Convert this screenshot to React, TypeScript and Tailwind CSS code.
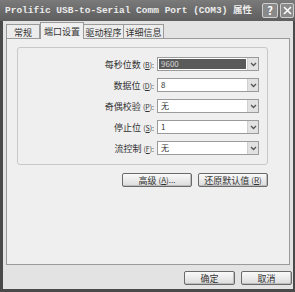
import React from 'react';

const cjk = '"Noto Sans CJK SC", "DejaVu Sans", sans-serif';

function Combo({ value, selected }: { value: string; selected?: boolean }) {
  return (
    <div className="flex h-[14px] w-[102px] border border-[#9a9a9a] bg-white">
      <div className="flex flex-1 items-center p-[1px]">
        <div
          className={
            'flex h-full flex-1 items-center pl-[2px] text-[8px] leading-none ' +
            (selected ? 'bg-[#5a5a5a] text-[#d8d8d8]' : 'text-[#333]')
          }
        >
          {value}
        </div>
      </div>
      <div className="flex w-[11px] items-center justify-center border-l border-[#d0d0d0] bg-[#e2e2e2]">
        <svg width="7" height="5" viewBox="0 0 7 5">
          <path d="M1 1 L3.5 3.5 L6 1" fill="none" stroke="#555" strokeWidth="1.3" />
        </svg>
      </div>
    </div>
  );
}

function Row({ label, value, selected }: { label: React.ReactNode; value: string; selected?: boolean }) {
  return (
    <div className="flex h-[14px] items-center">
      <div className="w-[139px] pr-[3px] text-right text-[9px] leading-none text-[#333]">{label}</div>
      <Combo value={value} selected={selected} />
    </div>
  );
}

function Key({ k }: { k: string }) {
  return (
    <span className="text-[7px]">
      (<span className="underline">{k}</span>):
    </span>
  );
}

function Btn({ children, w }: { children: React.ReactNode; w: string }) {
  return (
    <div
      className={
        w +
        ' flex h-[14px] items-center justify-center rounded-[2px] border border-[#6a6a6a] bg-gradient-to-b from-[#fafafa] to-[#dcdcdc] text-[9px] leading-none text-[#333] shadow-[inset_-1px_-1px_0_#bdbdbd]'
      }
    >
      {children}
    </div>
  );
}

export default function App() {
  return (
    <div
      className="flex h-[292px] w-[295px] flex-col overflow-hidden bg-[#4a4a4a]"
      style={{ fontFamily: cjk }}
    >
      {/* Title bar */}
      <div className="flex h-[21px] items-center bg-gradient-to-b from-[#7a7a7a] to-[#5e5e5e] pl-[5px] pr-[1px]">
        <div
          className="flex-1 whitespace-nowrap text-[9.5px] font-bold leading-none text-[#ececec]"
          style={{ fontFamily: '"Liberation Mono", "Noto Sans CJK SC", monospace' }}
        >
          Prolific USB-to-Serial Comm Port (COM3) 属性
        </div>
        <div className="flex gap-[2px]">
          <div className="flex h-[15px] w-[16px] items-center justify-center rounded-[2px] border border-[#cfcfcf] bg-[#8a8a8a] text-[11px] font-bold leading-none text-white">
            ?
          </div>
          <div className="flex h-[15px] w-[14px] items-center justify-center rounded-[2px] border border-[#cfcfcf] bg-[#8a8a8a]">
            <svg width="9" height="9" viewBox="0 0 9 9">
              <path d="M1 1 L8 8 M8 1 L1 8" stroke="#fff" strokeWidth="1.6" />
            </svg>
          </div>
        </div>
      </div>

      {/* Body */}
      <div className="ml-[3px] mr-[2px] flex flex-1 flex-col bg-[#e3e3e3]">
        {/* Tabs */}
        <div className="flex h-[17px] items-end pl-[3px]">
          <div className="mb-[-1px] flex h-[15px] w-[34px] items-center justify-center border border-b-0 border-[#9a9a9a] bg-[#ececec] text-[9px] leading-none text-[#333]">
            常规
          </div>
          <div className="relative z-10 mb-[-1px] flex h-[17px] w-[44px] items-center justify-center border border-b-0 border-[#9a9a9a] bg-[#efefef] text-[9px] leading-none text-[#333]">
            端口设置
          </div>
          <div className="mb-[-1px] flex h-[15px] w-[40px] items-center justify-center border border-b-0 border-l-0 border-[#9a9a9a] bg-[#ececec] text-[9px] leading-none text-[#333]">
            驱动程序
          </div>
          <div className="mb-[-1px] flex h-[15px] w-[40px] items-center justify-center border border-b-0 border-l-0 border-[#9a9a9a] bg-[#ececec] text-[9px] leading-none text-[#333]">
            详细信息
          </div>
        </div>

        {/* Panel */}
        <div className="ml-[3px] mr-[3px] h-[227px] border border-[#9a9a9a] bg-[#efefef] pl-[10px] pt-[8px]">
          <div className="flex h-[118px] w-[251px] flex-col gap-[7px] rounded-[3px] border border-[#c8c8c8] pt-[9px]">
            <Row label={<>每秒位数 <Key k="B" /></>} value="9600" selected />
            <Row label={<>数据位 <Key k="D" /></>} value="8" />
            <Row label={<>奇偶校验 <Key k="P" /></>} value="无" />
            <Row label={<>停止位 <Key k="S" /></>} value="1" />
            <Row label={<>流控制 <Key k="F" /></>} value="无" />
          </div>
          <div className="mt-[8px] flex w-[251px] justify-end gap-[6px]">
            <Btn w="w-[70px]">
              高级 <span className="ml-[2px] text-[8px]">(<span className="underline">A</span>)...</span>
            </Btn>
            <Btn w="w-[70px]">
              还原默认值 <span className="ml-[2px] text-[8px]">(<span className="underline">R</span>)</span>
            </Btn>
          </div>
        </div>

        {/* Footer */}
        <div className="flex flex-1 justify-end gap-[6px] pr-[1px] pt-[6px]">
          <Btn w="w-[51px]">确定</Btn>
          <Btn w="w-[51px]">取消</Btn>
        </div>
      </div>
      <div className="h-[3px]" />
    </div>
  );
}
